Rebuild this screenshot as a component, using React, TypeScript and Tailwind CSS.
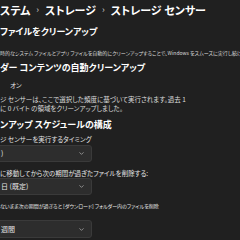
import React from 'react';
import { ChevronDown } from 'lucide-react';

const font = "[font-family:'Noto_Sans_CJK_JP','Noto_Sans',sans-serif] [font-feature-settings:'palt']";

const Dropdown: React.FC<{ label: string; tall?: boolean }> = ({ label, tall }) => (
  <div
    className={`-ml-[20px] flex w-[112px] items-center justify-between rounded-[3px] border border-[#3a3a3a] bg-[#2d2d2d] pl-[20px] pr-[6px] ${
      tall ? 'h-[18px]' : 'h-[17px]'
    }`}
  >
    <span className="text-[7px] leading-none text-[#e6e6e6]">{label}</span>
    <ChevronDown size={7} strokeWidth={2} className="text-[#cfcfcf]" />
  </div>
);

const App: React.FC = () => {
  return (
    <div className={`h-[240px] w-[240px] overflow-hidden bg-[#202020] text-white ${font}`}>
      <div className="flex flex-col">
        <div className="mt-[3px] flex h-[14px] items-center gap-[6px] whitespace-nowrap text-[11px] font-bold leading-[14px]">
          <span>ステム</span>
          <span className="text-[9px] font-normal text-[#cfcfcf]">›</span>
          <span>ストレージ</span>
          <span className="text-[9px] font-normal text-[#cfcfcf]">›</span>
          <span>ストレージ センサー</span>
        </div>

        <div className="mt-[9px] whitespace-nowrap text-[9px] font-bold leading-[12px]">ファイルをクリーンアップ</div>
        <div className="mt-[10px] whitespace-nowrap text-[5px] leading-[9px] text-[#dcdcdc]">
          時的なシステム ファイルとアプリ ファイルを自動的にクリーンアップすることで、Windows をスムーズに実行し続けます
        </div>

        <div className="mt-[5px] whitespace-nowrap text-[9px] font-bold leading-[12px]">ダー コンテンツの自動クリーンアップ</div>
        <div className="ml-[10px] mt-[7px] text-[6.5px] leading-[9px] text-[#e6e6e6]">オン</div>
        <div className="mt-[5px] whitespace-nowrap text-[6.5px] leading-[9px] text-[#dcdcdc]">
          <div>ジ センサーは、ここで選択した頻度に基づいて実行されます。過去 1</div>
          <div>に 0 バイト の領域をクリーンアップしました。</div>
        </div>

        <div className="mt-[6px] whitespace-nowrap text-[9px] font-bold leading-[12px]">ンアップ スケジュールの構成</div>
        <div className="mt-[4px] whitespace-nowrap text-[6.5px] leading-[9px] text-[#e6e6e6]">ジ センサーを実行するタイミング</div>
        <div className="mt-[1px]"><Dropdown label=")" /></div>

        <div className="mt-[7px] whitespace-nowrap text-[6.5px] leading-[9px] text-[#e6e6e6]">に移動してから次の期間が過ぎたファイルを削除する:</div>
        <div><Dropdown label="日 (既定)" /></div>

        <div className="mt-[6px] whitespace-nowrap text-[5px] leading-[9px] text-[#e6e6e6]">ないまま次の期間が過ぎると [ダウンロード] フォルダー内のファイルを削除</div>
        <div className="mt-[10px]"><Dropdown label="週間" tall /></div>
      </div>
    </div>
  );
};

export default App;
